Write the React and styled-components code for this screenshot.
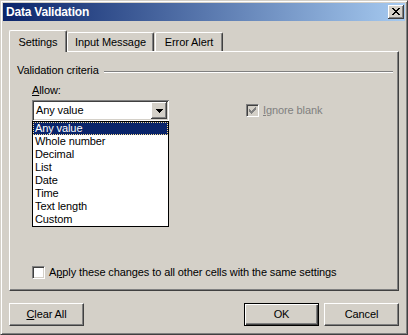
import React from "react";
import styled, { createGlobalStyle } from "styled-components";

const Global = createGlobalStyle`
  html, body { margin: 0; padding: 0; background: #d4d0c8; overflow: hidden; }
  body { font-family: "Liberation Sans", Arial, sans-serif; font-size: 11px; line-height: 13px; color: #000; letter-spacing: -0.1px; }
  * { box-sizing: border-box; }
`;

const FACE = "#d4d0c8";

const Window = styled.div`
  width: 408px;
  height: 335px;
  background: ${FACE};
  border: 1px solid;
  border-color: ${FACE} #404040 #404040 ${FACE};
  box-shadow: inset 1px 1px #fff, inset -1px -1px #808080;
  padding: 2px;
  display: flex;
  flex-direction: column;
`;

const TitleBar = styled.div`
  height: 18px;
  flex: none;
  display: flex;
  align-items: center;
  justify-content: space-between;
  padding: 0 1px 0 3px;
  background: linear-gradient(to right, #0a246a, #a6caf0);
  color: #fff;
  font-weight: bold;
  font-size: 12px;
  letter-spacing: -0.2px;
`;

const Raised = styled.div`
  background: ${FACE};
  box-shadow: inset -1px -1px #404040, inset 1px 1px #fff, inset -2px -2px #808080, inset 2px 2px ${FACE};
`;

const CloseButton = styled(Raised)`
  width: 16px;
  height: 14px;
  display: flex;
  align-items: flex-start;
  padding: 3px 0 0 4px;
`;

const Body = styled.div`
  flex: 1;
  display: flex;
  flex-direction: column;
  padding: 9px 6px 0 6px;
`;

const TabStrip = styled.div`
  height: 21px;
  display: flex;
  align-items: flex-end;
`;

const Tab = styled.div`
  position: relative;
  z-index: ${(p) => (p.$active ? 1 : 0)};
  width: ${(p) => p.$w}px;
  height: ${(p) => (p.$active ? 22 : 19)}px;
  margin-bottom: ${(p) => (p.$active ? -1 : 0)}px;
  margin-left: ${(p) => p.$ml || 0}px;
  background: ${FACE};
  border-top: 1px solid #fff;
  border-left: 1px solid #fff;
  border-right: 1px solid #404040;
  border-radius: 2px 2px 0 0;
  box-shadow: inset -1px 0 #808080;
  display: flex;
  align-items: flex-end;
  justify-content: center;
  padding-bottom: ${(p) => (p.$active ? 3 : 2)}px;
`;

const Panel = styled.div`
  height: 240px;
  flex: none;
  border: 1px solid;
  border-color: #fff #404040 #404040 #fff;
  box-shadow: inset -1px -1px #808080;
  display: flex;
  flex-direction: column;
  padding: 12px 5px 11px 7px;
`;

const GroupHeader = styled.div`
  display: flex;
  align-items: flex-start;
`;

const GroupLine = styled.div`
  flex: 1;
  height: 2px;
  margin: 7px 0 0 5px;
  border-top: 1px solid #808080;
  border-bottom: 1px solid #fff;
`;

const Criteria = styled.div`
  margin: 7px 0 0 15px;
  display: flex;
  flex-direction: column;
  gap: 3px;
`;

const CriteriaRow = styled.div`
  display: flex;
  align-items: center;
  gap: 77px;
`;

const ComboWrap = styled.div`
  position: relative;
  width: 137px;
  height: 21px;
`;

const Combo = styled.div`
  width: 100%;
  height: 100%;
  background: #fff;
  box-shadow: inset 1px 1px #808080, inset -1px -1px #fff, inset 2px 2px #404040, inset -2px -2px ${FACE};
  display: flex;
  align-items: center;
  justify-content: space-between;
  padding: 2px 2px 2px 4px;
`;

const DropButton = styled(Raised)`
  width: 16px;
  height: 17px;
  display: flex;
  align-items: center;
  justify-content: center;
`;

const List = styled.div`
  position: absolute;
  top: 100%;
  left: 0;
  width: 137px;
  background: #fff;
  border: 1px solid #000;
  z-index: 5;
`;

const Item = styled.div`
  height: 13px;
  padding-left: 1px;
  border: 1px dotted ${(p) => (p.$selected ? "#f5db95" : "transparent")};
  border-width: ${(p) => (p.$selected ? "1px" : "0 0 0 1px")};
  background: ${(p) => (p.$selected ? "#0a246a" : "#fff")};
  color: ${(p) => (p.$selected ? "#fff" : "#000")};
  line-height: ${(p) => (p.$selected ? 11 : 13)}px;
  white-space: nowrap;
`;

const CheckRow = styled.div`
  display: flex;
  align-items: center;
  gap: 4px;
  color: ${(p) => (p.$disabled ? "#808080" : "#000")};
  margin-left: ${(p) => p.$ml || 0}px;
  margin-top: ${(p) => (p.$bottom ? "auto" : "0")};
`;

const CheckBox = styled.div`
  width: 13px;
  height: 13px;
  flex: none;
  border: 1px solid;
  border-color: #808080 #fff #fff #808080;
  box-shadow: inset 1px 1px #404040, inset -1px -1px ${FACE};
  background: ${(p) => (p.$disabled ? FACE : "#fff")};
  display: flex;
  align-items: flex-start;
  padding: 2px 0 0 2px;
`;

const ButtonRow = styled.div`
  margin-top: 12px;
  display: flex;
  align-items: center;
`;

const Spacer = styled.div`
  flex: 1;
`;

const Button = styled.div`
  width: 75px;
  height: 23px;
  margin-left: ${(p) => p.$ml || 0}px;
  background: ${FACE};
  display: flex;
  align-items: center;
  justify-content: center;
  border: 1px solid;
  border-color: ${(p) => (p.$default ? "#000" : "#fff #404040 #404040 #fff")};
  box-shadow: ${(p) =>
    p.$default
      ? "inset 1px 1px #fff, inset -1px -1px #404040, inset -2px -2px #808080"
      : "inset -1px -1px #808080"};
`;

const Accel = styled.span`
  text-decoration: underline;
  text-underline-offset: 1px;
`;

const Pixels = ({ cells, w, h, color }) => (
  <svg width={w} height={h} viewBox={`0 0 ${w} ${h}`} shapeRendering="crispEdges" style={{ display: "block" }}>
    {cells.map(([x, y, cw, ch], i) => (
      <rect key={i} x={x} y={y} width={cw} height={ch} fill={color} />
    ))}
  </svg>
);

const closeCells = [
  [0, 0, 2, 1], [6, 0, 2, 1],
  [1, 1, 2, 1], [5, 1, 2, 1],
  [2, 2, 4, 1],
  [3, 3, 2, 1],
  [2, 4, 4, 1],
  [1, 5, 2, 1], [5, 5, 2, 1],
  [0, 6, 2, 1], [6, 6, 2, 1],
];

const arrowCells = [
  [0, 0, 7, 1], [1, 1, 5, 1], [2, 2, 3, 1], [3, 3, 1, 1],
];

const checkCells = [
  [0, 2, 1, 3], [1, 3, 1, 3], [2, 4, 1, 3], [3, 3, 1, 3], [4, 2, 1, 3], [5, 1, 1, 3], [6, 0, 1, 3],
];

const options = ["Any value", "Whole number", "Decimal", "List", "Date", "Time", "Text length", "Custom"];

export default function App() {
  return (
    <>
      <Global />
      <Window>
        <TitleBar>
          <span>Data Validation</span>
          <CloseButton>
            <Pixels cells={closeCells} w={8} h={7} color="#000" />
          </CloseButton>
        </TitleBar>
        <Body>
          <TabStrip>
            <Tab $active $w={58}>Settings</Tab>
            <Tab $w={87}>Input Message</Tab>
            <Tab $w={68} $ml={1}>Error Alert</Tab>
          </TabStrip>
          <Panel>
            <GroupHeader>
              <span>Validation criteria</span>
              <GroupLine />
            </GroupHeader>
            <Criteria>
              <span>
                <Accel>A</Accel>llow:
              </span>
              <CriteriaRow>
                <ComboWrap>
                  <Combo>
                    <span>Any value</span>
                    <DropButton>
                      <Pixels cells={arrowCells} w={7} h={4} color="#000" />
                    </DropButton>
                  </Combo>
                  <List>
                    {options.map((o, i) => (
                      <Item key={o} $selected={i === 0}>
                        {o}
                      </Item>
                    ))}
                  </List>
                </ComboWrap>
                <CheckRow $disabled>
                  <CheckBox $disabled>
                    <Pixels cells={checkCells} w={7} h={7} color="#808080" />
                  </CheckBox>
                  <span>
                    <Accel>I</Accel>gnore blank
                  </span>
                </CheckRow>
              </CriteriaRow>
            </Criteria>
            <CheckRow $bottom $ml={15}>
              <CheckBox />
              <span>
                A<Accel>p</Accel>ply these changes to all other cells with the same settings
              </span>
            </CheckRow>
          </Panel>
          <ButtonRow>
            <Button>
              <span>
                <Accel>C</Accel>lear All
              </span>
            </Button>
            <Spacer />
            <Button $default>OK</Button>
            <Button $ml={5}>Cancel</Button>
          </ButtonRow>
        </Body>
      </Window>
    </>
  );
}
